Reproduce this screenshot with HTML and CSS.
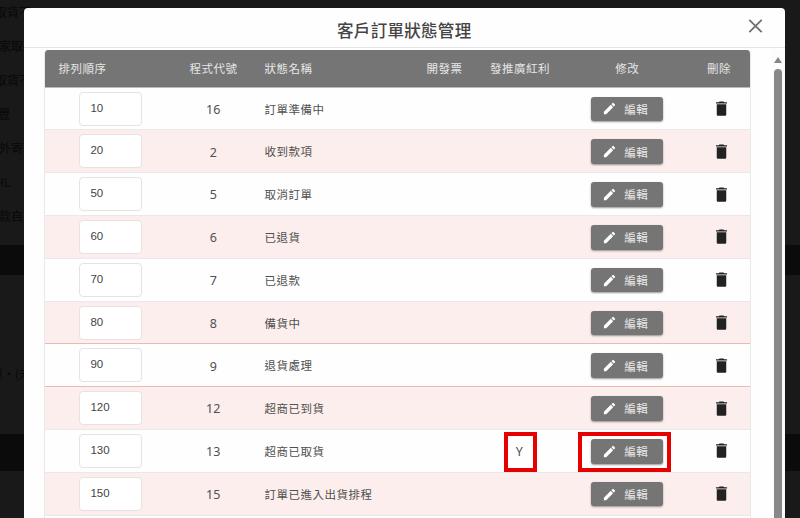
FILE: index.html
```html
<!DOCTYPE html>
<html lang="zh-Hant">
<head>
<meta charset="utf-8">
<title>客戶訂單狀態管理</title>
<link rel="stylesheet" href="styles.css">
</head>
<body>
<svg width="0" height="0" class="defs">
  <symbol id="pen" viewBox="0 0 24 24"><path d="M3 17.25V21h3.75L17.81 9.94l-3.75-3.75L3 17.25zM20.71 7.04a1 1 0 0 0 0-1.41l-2.34-2.34a1 1 0 0 0-1.41 0l-1.83 1.83 3.75 3.75 1.83-1.83z"/></symbol>
  <symbol id="bin" viewBox="0 0 24 24"><path d="M6 20a1 1 0 0 0 1 1H17a1 1 0 0 0 1-1V6.500H6V20z M19 4H15.500L14.500 3H9.500L8.500 4H5V5.800H19V4z"/></symbol>
</svg>
<div class="backdrop">
  <ul class="behind">
    <li>取貨不</li><li>家取</li><li>取貨不</li><li>豐</li><li>外寄</li><li>HL</li><li>款自</li>
  </ul>
  <div class="bar bar-a"></div>
  <p class="note">單‧(未</p>
  <div class="bar bar-b"></div>
</div>
<main class="modal">
  <header class="head">
    <h1>客戶訂單狀態管理</h1>
    <svg class="close" viewBox="0 0 14 14"><path d="M.8.8L13.200 13.200M13.200.8L.8 13.200"/></svg>
  </header>
  <div class="body">
    <div class="table" id="table">
      <div class="row thead"><span class="first">排列順序</span><span>程式代號</span><span class="name">狀態名稱</span><span>開發票</span><span>發推廣紅利</span><span>修改</span><span>刪除</span></div>
    </div>
    <div class="scroll"><i class="arrow"></i><i class="thumb"></i></div>
  </div>
</main>
<script src="rows.js"></script>
</body>
</html>
```
FILE: styles.css
```css
* { box-sizing: border-box; }
body { margin: 0; width: 800px; height: 518px; overflow: hidden; position: relative; background: #191919; color: #505050; font-family: "Noto Sans", "Noto Sans CJK TC", sans-serif; font-size: 12px; }
.defs { position: absolute; }
.backdrop { height: 518px; overflow: hidden; color: #080808; }
.behind { margin: 0; padding: 0; list-style: none; height: 245px; }
.behind li { height: 34px; line-height: 26px; white-space: nowrap; text-indent: -5px; }
.behind li:nth-child(2), .behind li:nth-child(5), .behind li:nth-child(7) { text-indent: -1px; }
.behind li:nth-child(4) { text-indent: -2px; }
.bar { background: #0b0b0b; }
.bar-a { height: 30px; }
.note { margin: 0; height: 159px; padding-top: 89px; text-indent: -9px; white-space: nowrap; line-height: 20px; font-family: "Noto Sans CJK TC", sans-serif; }
.bar-b { height: 37px; }
.modal { position: absolute; left: 24px; top: 8px; width: 760.500px; height: 530px; background: #fefefe; border-radius: 4px; overflow: hidden; }
.head { height: 40px; border-bottom: 1px solid #e4e4e4; display: flex; justify-content: center; position: relative; }
h1 { margin: 0; padding-top: 10px; font-size: 16.500px; line-height: 25px; font-weight: 500; letter-spacing: .3px; color: #444; font-family: "Noto Sans CJK TC", sans-serif; }
.close { position: absolute; left: 724px; top: 11px; width: 15px; height: 14px; fill: none; stroke: #707070; stroke-width: 1.800; }
.body { display: flex; justify-content: space-between; padding: 2px 0 0 20.400px; }
.table { width: 706.500px; border: 1px solid #e9e9e9; border-top: 0; border-radius: 4px 4px 0 0; overflow: hidden; }
.row { display: grid; grid-template-columns: 130px 76px 148px 90px 61px 153.500px 1fr; align-items: center; height: 42.800px; border-bottom: 1px solid #e9e9e9; }
.row > * { justify-self: center; white-space: nowrap; }
.row > :last-child { justify-self: start; margin-left: 8px; }
.row:nth-child(odd) { background: #fceeec; }
.row.alert { border-bottom: 1.500px solid #f3b6b3; }
.row.thead { height: 37.700px; background: #757575; color: #e6e6e6; border-bottom: 1px solid #bbb; }
.row.thead > :last-child { margin-left: 3px; }
.row > .name { justify-self: start; padding-left: 13px; }
.row > .first { justify-self: start; padding-left: 13px; }
.row span { font-size: 11.500px; letter-spacing: .5px; }
.row .code { font-size: 12.500px; letter-spacing: 0; position: relative; top: .8px; left: -.2px; }
.num { width: 63px; height: 34px; border: 1px solid #e6e2e2; border-radius: 4px; background: #fff; font: 11.500px/31px "Liberation Sans", sans-serif; color: #444; padding-left: 10px; }
.row > .num { justify-self: end; margin-right: 33px; }
.edit { position: relative; top: .3px; left: 0; display: flex; align-items: center; width: 72px; height: 24.500px; padding-left: 11px; gap: 7px; border-radius: 3px; background: #757575; color: #e8e8e8; box-shadow: 0 1px 2px rgba(0,0,0,.4); }
.edit svg { width: 15px; height: 15px; fill: #fff; }
.bin { width: 19px; height: 19px; fill: #222; }
.flag { position: relative; top: .6px; }
.row .flag { font-size: 12.500px; letter-spacing: 0; left: -.5px; }
.marked::after { content: ""; position: absolute; box-sizing: border-box; border: 4px solid #e60000; height: 40px; }
.edit.marked::after { width: 93px; left: -13.500px; top: -7px; }
.flag.marked::after { width: 33px; left: -11.500px; top: -11px; }
.scroll { width: 13px; display: flex; flex-direction: column; align-items: center; padding-top: 7px; gap: 6px; background: #fcfcfc; }
.arrow { border: 4.500px solid transparent; border-top: 0; border-bottom: 6px solid #858585; }
.thumb { width: 7.500px; flex: 1; border-radius: 4px; background: #888; }
```
FILE: rows.js
```js
const rows = [
  [10, 16, '訂單準備中'], [20, 2, '收到款項'], [50, 5, '取消訂單'],
  [60, 6, '已退貨'], [70, 7, '已退款'], [80, 8, '備貨中', 'alert'],
  [90, 9, '退貨處理', 'alert'], [120, 12, '超商已到貨'],
  [130, 13, '超商已取貨', '', 'Y'], [150, 15, '訂單已進入出貨排程'], ['', '', '']
];
document.getElementById('table').insertAdjacentHTML('beforeend', rows.map(([order, code, name, cls = '', flag = '']) => `
  <div class="row ${cls}">
    <div class="num">${order}</div>
    <span class="code">${code}</span><span class="name">${name}</span><span></span>
    <span class="flag ${flag && 'marked'}">${flag}</span>
    <div class="edit ${flag && 'marked'}"><svg><use href="#pen"/></svg><span>編輯</span></div>
    <svg class="bin"><use href="#bin"/></svg>
  </div>`).join(''));
```
